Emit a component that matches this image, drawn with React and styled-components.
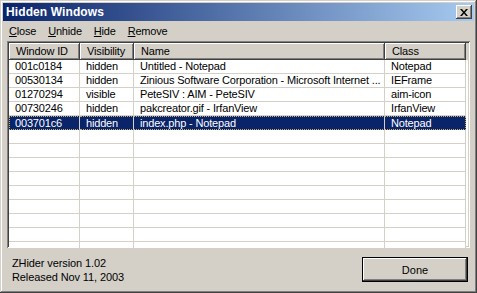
import React from 'react';
import styled, { createGlobalStyle } from 'styled-components';

const GlobalStyle = createGlobalStyle`
  html, body {
    margin: 0;
    padding: 0;
    background: #d4d0c8;
  }
  * {
    box-sizing: border-box;
  }
`;

const Window = styled.div`
  width: 477px;
  height: 293px;
  padding: 3px;
  display: flex;
  flex-direction: column;
  background: #d4d0c8;
  font-family: "Liberation Sans", Arial, sans-serif;
  font-size: 11px;
  color: #000;
  box-shadow: inset -1px -1px #404040, inset 1px 1px #d4d0c8,
    inset -2px -2px #808080, inset 2px 2px #fff;
  overflow: hidden;
`;

const TitleBar = styled.div`
  height: 18px;
  flex: none;
  display: flex;
  align-items: center;
  justify-content: space-between;
  padding: 0 2px 0 3px;
  background: linear-gradient(to right, #0a246a, #a6caf0);
`;

const Title = styled.span`
  color: #fff;
  font-weight: bold;
  font-size: 12px;
  letter-spacing: 0.1px;
`;

const CloseBox = styled.div`
  width: 16px;
  height: 14px;
  display: flex;
  align-items: center;
  justify-content: center;
  background: #d4d0c8;
  box-shadow: inset -1px -1px #404040, inset 1px 1px #fff,
    inset -2px -2px #808080;
`;

const MenuBar = styled.div`
  height: 20px;
  flex: none;
  display: flex;
  align-items: center;
`;

const MenuItem = styled.span`
  padding: 0 6px;
  line-height: 14px;
  letter-spacing: -0.2px;
  u {
    text-decoration: underline;
    text-underline-offset: 1px;
  }
`;

const ListView = styled.div`
  flex: 1;
  margin: 0 4px;
  padding: 2px;
  background: #fff;
  box-shadow: inset 1px 1px #808080, inset -1px -1px #fff,
    inset 2px 2px #404040, inset -2px -2px #d4d0c8;
  overflow: hidden;
  display: flex;
  flex-direction: column;
`;

const Columns = styled.div`
  display: grid;
  grid-template-columns: 71px 54px 251px 81px 1fr;
`;

const HeaderRow = styled(Columns)`
  height: 17px;
  flex: none;
  background: #d4d0c8;
`;

const HeaderCell = styled.div`
  padding-left: 7px;
  line-height: 16px;
  white-space: nowrap;
  letter-spacing: -0.15px;
  box-shadow: inset -1px -1px #404040, inset 1px 1px #fff,
    inset -2px -2px #808080;
`;

const HeaderFill = styled.div`
  background: #d4d0c8;
`;

const Row = styled(Columns)`
  height: 14px;
  flex: none;
`;

const Cell = styled.div`
  height: 14px;
  white-space: nowrap;
  overflow: hidden;
  letter-spacing: -0.17px;
  background: ${p => (p.selected ? '#0a246a' : '#fff')};
  color: ${p => (p.selected ? '#fff' : '#000')};
  border-top: ${p => (p.selected ? '1px dotted #c8b070' : 'none')};
  border-left: ${p => (p.selected && p.first ? '1px dotted #c8b070' : 'none')};
  border-right: 1px solid #d4d0c8;
  border-bottom: 1px solid #d4d0c8;
  border-right-style: ${p => (p.selected && p.last ? 'dotted' : 'solid')};
  border-right-color: ${p => (p.selected && p.last ? '#c8b070' : '#d4d0c8')};
  border-bottom-style: ${p => (p.selected ? 'dotted' : 'solid')};
  border-bottom-color: ${p => (p.selected ? '#c8b070' : '#d4d0c8')};
  line-height: ${p => (p.selected ? '12px' : '13px')};
  padding-left: ${p => (p.selected && p.first ? '5px' : '6px')};
`;

const Footer = styled.div`
  flex: none;
  height: 42px;
  display: flex;
  justify-content: space-between;
  align-items: flex-start;
  padding: 8px 6px 0 9px;
`;

const Info = styled.div`
  line-height: 14px;
  letter-spacing: -0.1px;
`;

const DoneButton = styled.button`
  width: 106px;
  height: 25px;
  margin-top: 1px;
  border: 1px solid #000;
  background: #d4d0c8;
  font-family: "Liberation Sans", Arial, sans-serif;
  font-size: 11px;
  color: #000;
  padding: 0;
  box-shadow: inset -1px -1px #404040, inset 1px 1px #fff,
    inset -2px -2px #808080;
`;

const windows = [
  ['001c0184', 'hidden', 'Untitled - Notepad', 'Notepad'],
  ['00530134', 'hidden', 'Zinious Software Corporation - Microsoft Internet ...', 'IEFrame'],
  ['01270294', 'visible', 'PeteSIV : AIM - PeteSIV', 'aim-icon'],
  ['00730246', 'hidden', 'pakcreator.gif - IrfanView', 'IrfanView'],
  ['003701c6', 'hidden', 'index.php - Notepad', 'Notepad'],
];

const SELECTED = 4;
const EMPTY_ROWS = 10;

const CloseIcon = () => (
  <svg width="8" height="7" viewBox="0 0 8 7">
    <path d="M0 0h2l2 2.5L6 0h2L5 3.5 8 7H6L4 4.5 2 7H0l3-3.5z" fill="#000" />
  </svg>
);

const App = () => {
  const rows = [...windows, ...Array.from({ length: EMPTY_ROWS }, () => ['', '', '', ''])];
  return (
    <>
      <GlobalStyle />
      <Window>
        <TitleBar>
          <Title>Hidden Windows</Title>
          <CloseBox>
            <CloseIcon />
          </CloseBox>
        </TitleBar>
        <MenuBar>
          <MenuItem><u>C</u>lose</MenuItem>
          <MenuItem><u>U</u>nhide</MenuItem>
          <MenuItem><u>H</u>ide</MenuItem>
          <MenuItem><u>R</u>emove</MenuItem>
        </MenuBar>
        <ListView>
          <HeaderRow>
            <HeaderCell>Window ID</HeaderCell>
            <HeaderCell>Visibility</HeaderCell>
            <HeaderCell>Name</HeaderCell>
            <HeaderCell>Class</HeaderCell>
            <HeaderFill />
          </HeaderRow>
          {rows.map((r, i) => (
            <Row key={i}>
              {r.map((text, j) => (
                <Cell key={j} selected={i === SELECTED} first={j === 0} last={j === 3}>
                  {text}
                </Cell>
              ))}
              <div />
            </Row>
          ))}
        </ListView>
        <Footer>
          <Info>
            ZHider version 1.02
            <br />
            Released Nov 11, 2003
          </Info>
          <DoneButton>Done</DoneButton>
        </Footer>
      </Window>
    </>
  );
};

export default App;
